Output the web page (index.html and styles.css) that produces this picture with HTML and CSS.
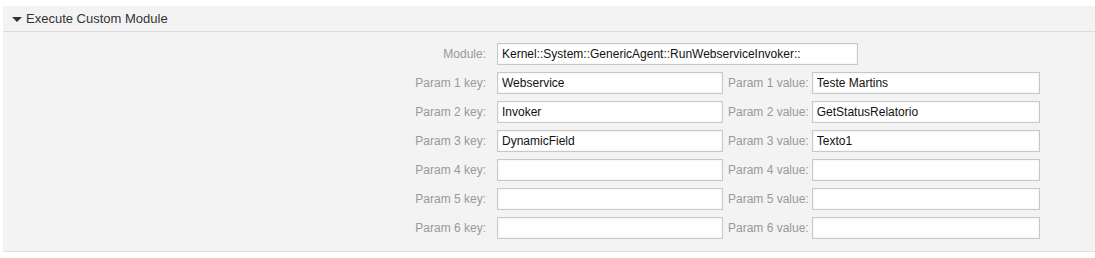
FILE: index.html
```html
<!DOCTYPE html>
<html>
<head>
<meta charset="utf-8">
<link rel="stylesheet" href="styles.css">
</head>
<body>
<div class="panel">
  <div class="panel-header">
    <span class="caret"></span>
    <h2 class="panel-title">Execute Custom Module</h2>
  </div>
  <div class="panel-body">
    <div class="row row-module">
      <label class="label">Module:</label>
      <input class="field field-wide" type="text" value="Kernel::System::GenericAgent::RunWebserviceInvoker::">
    </div>
    <div class="row">
      <label class="label">Param 1 key:</label>
      <input class="field field-key" type="text" value="Webservice">
      <label class="label-value">Param 1 value:</label>
      <input class="field field-value" type="text" value="Teste Martins">
    </div>
    <div class="row">
      <label class="label">Param 2 key:</label>
      <input class="field field-key" type="text" value="Invoker">
      <label class="label-value">Param 2 value:</label>
      <input class="field field-value" type="text" value="GetStatusRelatorio">
    </div>
    <div class="row">
      <label class="label">Param 3 key:</label>
      <input class="field field-key" type="text" value="DynamicField">
      <label class="label-value">Param 3 value:</label>
      <input class="field field-value" type="text" value="Texto1">
    </div>
    <div class="row">
      <label class="label">Param 4 key:</label>
      <input class="field field-key" type="text" value="">
      <label class="label-value">Param 4 value:</label>
      <input class="field field-value" type="text" value="">
    </div>
    <div class="row">
      <label class="label">Param 5 key:</label>
      <input class="field field-key" type="text" value="">
      <label class="label-value">Param 5 value:</label>
      <input class="field field-value" type="text" value="">
    </div>
    <div class="row">
      <label class="label">Param 6 key:</label>
      <input class="field field-key" type="text" value="">
      <label class="label-value">Param 6 value:</label>
      <input class="field field-value" type="text" value="">
    </div>
  </div>
</div>
</body>
</html>
```

FILE: styles.css
```css
html, body {
  margin: 0;
  padding: 0;
  background: #ffffff;
}
body {
  padding: 6px 0 0 3px;
  font-family: "Liberation Sans", Arial, sans-serif;
  font-size: 12px;
}
.panel {
  background: #f3f3f3;
  border-bottom: 1px solid #e0e0e0;
}
.panel-header {
  display: flex;
  align-items: center;
  height: 25px;
  border-bottom: 1px solid #dcdcdc;
  padding-left: 9px;
}
.caret {
  width: 0;
  height: 0;
  border-left: 5px solid transparent;
  border-right: 5px solid transparent;
  border-top: 5px solid #333;
  margin-right: 4px;
  margin-top: 1px;
}
.panel-title {
  margin: 0;
  font-size: 13px;
  font-weight: normal;
  color: #333;
}
.panel-body {
  padding: 8px 0 9px;
}
.row {
  display: flex;
  align-items: center;
  height: 29px;
}
.row-module {
  height: 28px;
}
.label {
  width: 483px;
  padding-right: 11px;
  text-align: right;
  color: #999;
  box-sizing: content-box;
}
.label-value {
  margin: 0 3px 0 5px;
  color: #999;
}
.field {
  box-sizing: border-box;
  height: 22px;
  margin: 0;
  padding: 0 4px;
  border: 1px solid #c8c8c8;
  background: #fff;
  box-shadow: inset 0 0 3px rgba(0, 0, 0, 0.08);
  font-family: "Liberation Sans", Arial, sans-serif;
  font-size: 12px;
  color: #111;
  outline: none;
}
.field-wide { width: 361px; }
.field-key { width: 226px; }
.field-value { width: 228px; }
```
